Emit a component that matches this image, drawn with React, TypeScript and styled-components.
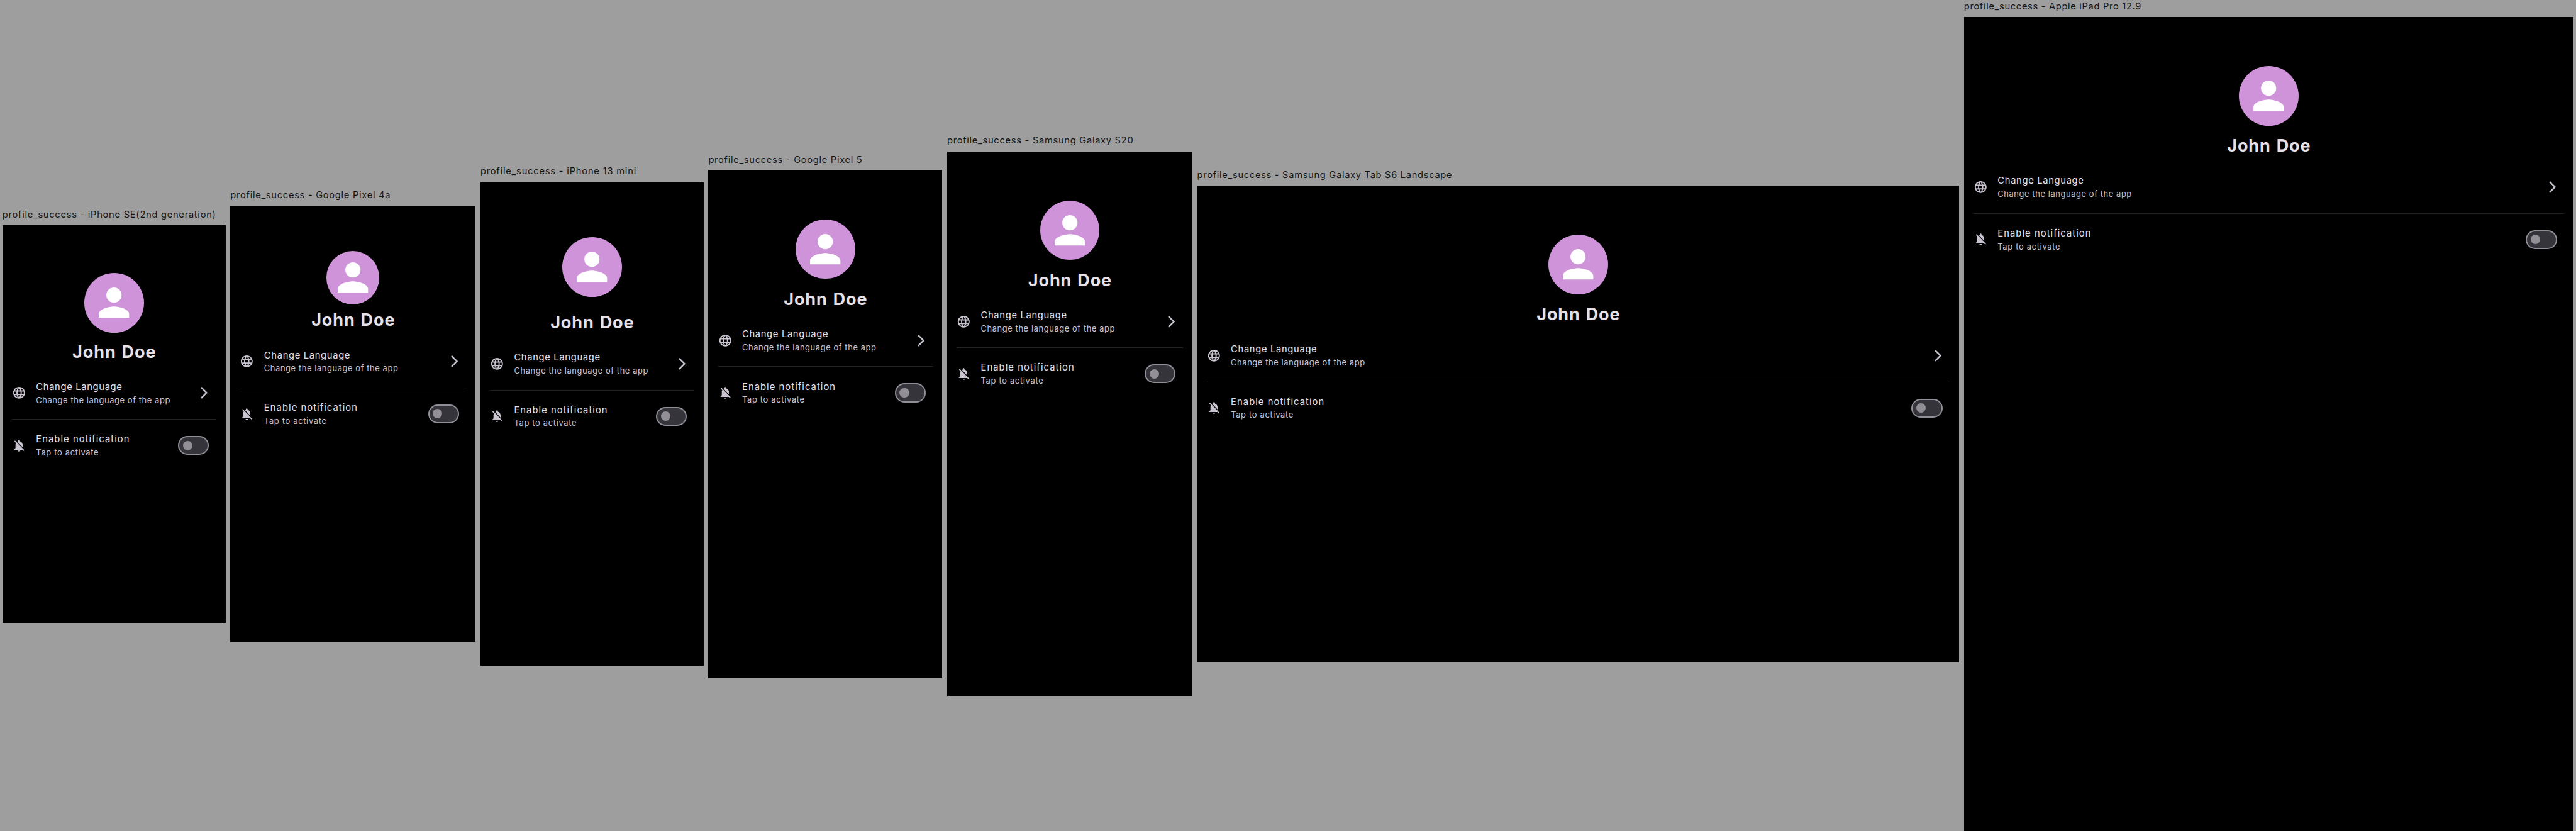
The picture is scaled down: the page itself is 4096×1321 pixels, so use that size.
import React from 'react';
import styled, { createGlobalStyle } from 'styled-components';
import { MdLanguage, MdNotificationsOff, MdPerson } from 'react-icons/md';

// 1rem = 10 logical device pixels, so that all seven screens fit the 4096px board.
const GlobalStyle = createGlobalStyle`
  html {
    font-size: calc(4096px / 432.7);
  }
  body {
    margin: 0;
    background: #9e9e9e;
    font-family: Inter, 'Liberation Sans', sans-serif;
    overflow: hidden;
  }
`;

const Board = styled.main`
  display: flex;
  align-items: center;
  gap: 0.8rem;
  box-sizing: border-box;
  width: 432.7rem;
  height: 139.5rem;
  padding: 0 0.4rem;
  background: #9e9e9e;
`;

const Device = styled.section<{ $width: number }>`
  display: flex;
  flex-direction: column;
  flex: none;
  width: ${(p) => p.$width / 10}rem;
`;

const DeviceLabel = styled.h2<{ $tracking: number }>`
  margin: 0;
  height: 2.9rem;
  font-size: 1.55rem;
  font-weight: 400;
  line-height: 2.2rem;
  letter-spacing: ${(p) => p.$tracking / 10}rem;
  color: #141414;
  white-space: nowrap;
`;

const Screen = styled.div<{ $height: number }>`
  display: flex;
  flex-direction: column;
  height: ${(p) => p.$height / 10}rem;
  background: #000;
`;

const Header = styled.header<{ $height: number; $top: number }>`
  display: flex;
  flex: none;
  flex-direction: column;
  align-items: center;
  justify-content: space-between;
  box-sizing: border-box;
  height: ${(p) => p.$height / 10}rem;
  padding: ${(p) => p.$top / 10}rem 0 1.57rem;
`;

const Avatar = styled.div<{ $size: number }>`
  display: flex;
  align-items: center;
  justify-content: center;
  width: ${(p) => p.$size / 10}rem;
  height: ${(p) => p.$size / 10}rem;
  border-radius: 50%;
  background: #ce93d8;
  color: #fff;
  font-size: 7.65rem;
`;

const Name = styled.h1`
  margin: 0;
  padding-left: 0.1rem;
  font-size: 2.85rem;
  font-weight: 700;
  line-height: 3.4rem;
  letter-spacing: 0.095rem;
  word-spacing: 0.18rem;
  color: #e6e0e9;
  white-space: nowrap;
`;

const Tile = styled.div<{ $end: number }>`
  display: flex;
  align-items: center;
  gap: 1.6rem;
  box-sizing: border-box;
  height: 7.2rem;
  padding: 0 ${(p) => p.$end / 10}rem 0 1.6rem;
`;

const TileIcon = styled.span`
  display: flex;
  flex: none;
  font-size: 2.4rem;
  color: #cac4d0;
`;

const TileText = styled.div`
  flex: 1;
  min-width: 0;
  padding: 0.16rem 0 0 0.06rem;
  white-space: nowrap;
`;

const Title = styled.div<{ $tracking: number }>`
  font-size: 1.56rem;
  line-height: 2.4rem;
  letter-spacing: ${(p) => p.$tracking / 10}rem;
  color: #e6e0e9;
`;

const Subtitle = styled.div<{ $tracking: number }>`
  font-size: 1.36rem;
  line-height: 2.2rem;
  letter-spacing: ${(p) => p.$tracking / 10}rem;
  color: #cac4d0;
`;

const Divider = styled.hr`
  flex: none;
  height: 1px;
  margin: 0.75rem 1.6rem;
  border: 0;
  background: #232226;
`;

const Switch = styled.span`
  display: flex;
  flex: none;
  align-items: center;
  box-sizing: border-box;
  width: 5.2rem;
  height: 3.2rem;
  padding-left: 0.6rem;
  border: 2px solid #938f99;
  border-radius: 1.6rem;
  background: #36343b;
`;

const Thumb = styled.span`
  width: 1.6rem;
  height: 1.6rem;
  border-radius: 50%;
  background: #938f99;
`;

const Chevron = () => (
  <svg viewBox="0 0 24 24" width="1em" height="1em" fill="currentColor">
    <path d="M6.49 20.13l1.77 1.77 9.9-9.9-9.9-9.9-1.77 1.77L14.62 12z" />
  </svg>
);

interface DeviceSpec {
  name: string;
  width: number;
  height: number;
  header: number;
  top: number;
  avatar: number;
  tracking: number;
}

const devices: DeviceSpec[] = [
  { name: 'iPhone SE(2nd generation)', width: 375, height: 667, header: 245.6, top: 80.3, avatar: 100, tracking: 0.77 },
  { name: 'Google Pixel 4a', width: 412, height: 732, header: 225, top: 76, avatar: 89, tracking: 0.76 },
  { name: 'iPhone 13 mini', width: 375, height: 812, header: 269, top: 92.3, avatar: 100, tracking: 0.85 },
  { name: 'Google Pixel 5', width: 393, height: 851, header: 249.3, top: 82, avatar: 100, tracking: 0.75 },
  { name: 'Samsung Galaxy S20', width: 412, height: 915, header: 249.3, top: 82, avatar: 100, tracking: 0.76 },
  { name: 'Samsung Galaxy Tab S6 Landscape', width: 1280, height: 800, header: 249.3, top: 82, avatar: 100, tracking: 0.74 },
  { name: 'Apple iPad Pro 12.9', width: 1024, height: 1366, header: 249.3, top: 82, avatar: 100, tracking: 0.72 },
];

const ProfileScreen = ({ device }: { device: DeviceSpec }) => (
  <Screen $height={device.height}>
    <Header $height={device.header} $top={device.top}>
      <Avatar $size={device.avatar}>
        <MdPerson />
      </Avatar>
      <Name>John Doe</Name>
    </Header>
    <Tile $end={24}>
      <TileIcon>
        <MdLanguage />
      </TileIcon>
      <TileText>
        <Title $tracking={0.7}>Change Language</Title>
        <Subtitle $tracking={0.64}>Change the language of the app</Subtitle>
      </TileText>
      <TileIcon>
        <Chevron />
      </TileIcon>
    </Tile>
    <Divider />
    <Tile $end={28}>
      <TileIcon>
        <MdNotificationsOff />
      </TileIcon>
      <TileText>
        <Title $tracking={1.12}>Enable notification</Title>
        <Subtitle $tracking={0.74}>Tap to activate</Subtitle>
      </TileText>
      <Switch>
        <Thumb />
      </Switch>
    </Tile>
  </Screen>
);

export default function App() {
  return (
    <>
      <GlobalStyle />
      <Board>
        {devices.map((device) => (
          <Device key={device.name} $width={device.width}>
            <DeviceLabel $tracking={device.tracking}>profile_success - {device.name}</DeviceLabel>
            <ProfileScreen device={device} />
          </Device>
        ))}
      </Board>
    </>
  );
}
